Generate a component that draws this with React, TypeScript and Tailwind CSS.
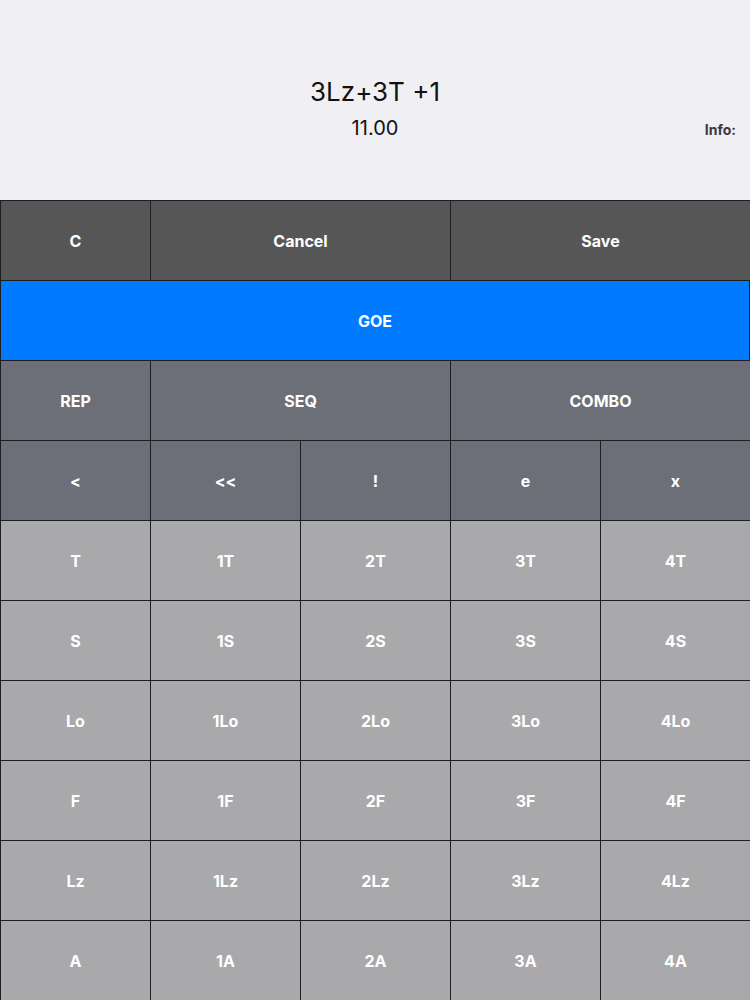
import React from 'react'

type Cell = { label: string; span?: number }

const rows: { bg: string; cells: Cell[] }[] = [
  { bg: 'bg-[#565656]', cells: [{ label: 'C' }, { label: 'Cancel', span: 2 }, { label: 'Save', span: 2 }] },
  { bg: 'bg-[#007aff]', cells: [{ label: 'GOE', span: 5 }] },
  { bg: 'bg-[#6c6f78]', cells: [{ label: 'REP' }, { label: 'SEQ', span: 2 }, { label: 'COMBO', span: 2 }] },
  { bg: 'bg-[#6c6f78]', cells: [{ label: '<' }, { label: '<<' }, { label: '!' }, { label: 'e' }, { label: 'x' }] },
  ...['T', 'S', 'Lo', 'F', 'Lz', 'A'].map(j => ({
    bg: 'bg-[#a9a8ab]',
    cells: [{ label: j }, { label: '1' + j }, { label: '2' + j }, { label: '3' + j }, { label: '4' + j }],
  })),
]

export default function App() {
  return (
    <div className="w-[750px] h-[1000px] bg-[#efeff4] flex flex-col overflow-hidden" style={{ fontFamily: 'Inter, "Liberation Sans", sans-serif' }}>
      {/* header / readout */}
      <div className="relative h-[200px] flex flex-col items-center pt-[74px]">
        <div className="text-[26px] leading-[36px] text-[#111]">3Lz+3T +1</div>
        <div className="text-[20px] leading-[28px] text-[#111] mt-[4px]">11.00</div>
        <div className="absolute right-[14px] top-[119px] text-[14px] font-bold text-[#3a3a3a]">Info:</div>
      </div>

      {/* keypad */}
      <div className="flex flex-col">
        {rows.map((row, ri) => (
          <div key={ri} className={`flex h-[80px] border-t border-[#1e1e20] ${row.bg}`}>
            {row.cells.map((c, ci) => (
              <div
                key={ci}
                className={`flex items-center justify-center border-l border-[#1e1e20] text-white font-bold text-[16px] ${c.span === 5 ? 'w-[750px] border-r' : c.span === 2 ? 'w-[300px]' : 'w-[150px]'}`}
              >
                {c.label}
              </div>
            ))}
          </div>
        ))}
      </div>
    </div>
  )
}
